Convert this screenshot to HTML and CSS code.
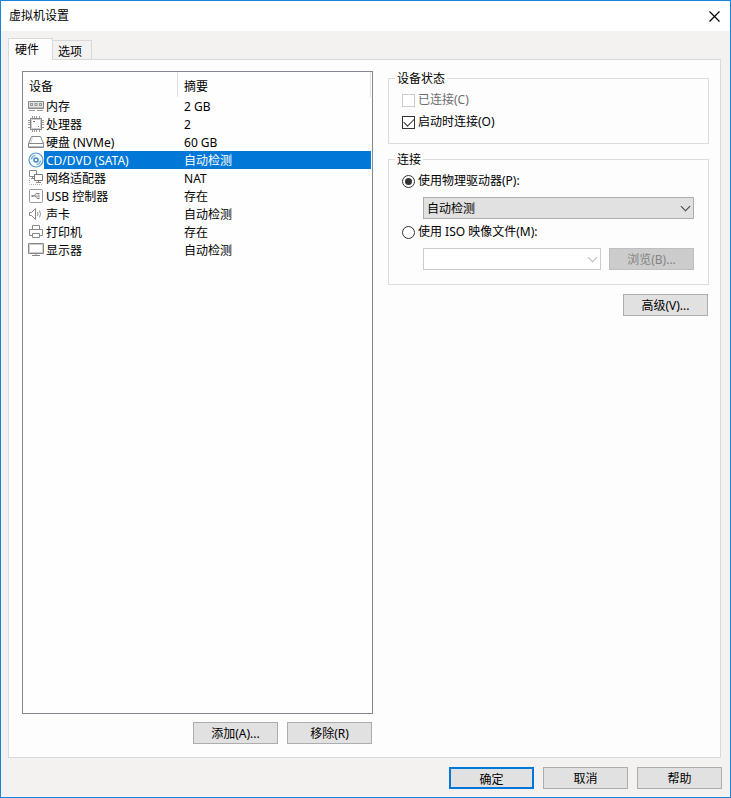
FILE: index.html
```html
<!DOCTYPE html>
<html lang="zh-CN">
<head>
    <meta charset="UTF-8">
    <meta name="viewport" content="width=device-width, initial-scale=1.0">
    <title>虚拟机设置</title>
    <link rel="stylesheet" href="styles.css">
</head>
<body>
    <div class="dialog">
        <header class="titlebar">
            <h1>虚拟机设置</h1>
            <button type="button" class="close" aria-label="关闭">
                <svg width="11" height="11" viewBox="0 0 11 11"><path d="M.5.5l10 10M10.5.5l-10 10" fill="none" stroke="#000" stroke-width="1.2"/></svg>
            </button>
        </header>

        <div class="tabs" role="tablist">
            <button type="button" class="tab active" role="tab" aria-selected="true">硬件</button>
            <button type="button" class="tab" role="tab" aria-selected="false">选项</button>
        </div>

        <main class="panel">
            <!-- Device list -->
            <section class="devices">
                <div class="list-box">
                    <table class="device-table">
                        <colgroup>
                            <col class="col-icon">
                            <col class="col-name">
                            <col>
                        </colgroup>
                        <thead>
                            <tr><th colspan="2">设备</th><th>摘要</th></tr>
                        </thead>
                        <tbody>
                            <tr>
                                <td class="icon"><svg width="16" height="16" viewBox="0 0 16 16"><path d="M.5 3.500h15v7h-15z" fill="#e4e4e4" stroke="#888"/><path d="M2 5h3v3H2zM6.500 5h3v3h-3zM11 5h3v3h-3z" fill="#999"/><path d="M3 6h1v1H3zM7.500 6h1v1h-1zM12 6h1v1h-1z" fill="#ddd"/><path d="M1 9.500h14" stroke="#bbb"/><path d="M1 12.500h6M9 12.500h6" stroke="#999"/></svg></td>
                                <td class="name">内存</td><td class="summary">2 GB</td>
                            </tr>
                            <tr>
                                <td class="icon"><svg width="16" height="16" viewBox="0 0 16 16"><path d="M4.500 0v2M6.500 0v2M8.500 0v2M11.500 0v2M4.500 14v2M6.500 14v2M8.500 14v2M11.500 14v2M0 4.500h2M0 6.500h2M0 8.500h2M0 11.500h2M14 4.500h2M14 6.500h2M14 8.500h2M14 11.500h2" stroke="#999"/><path d="M2.500 2.500h11v11h-11z" fill="#fff" stroke="#888"/><path d="M3.500 3.500h9v9h-9z" fill="none" stroke="#ccc"/><path d="M5 5h2v1H5zM10 10h1v1h-1z" fill="#777"/></svg></td>
                                <td class="name">处理器</td><td class="summary">2</td>
                            </tr>
                            <tr>
                                <td class="icon"><svg width="16" height="16" viewBox="0 0 16 16"><path d="M3.500 2.500h9l3 7v4H.5v-4zM.5 9.500h15" fill="#fff" stroke="#888"/><path d="M1 12.500h14" stroke="#bbb"/><path d="M2.500 9l2-5.500" fill="none" stroke="#ccc"/></svg></td>
                                <td class="name">硬盘 (NVMe)</td><td class="summary">60 GB</td>
                            </tr>
                            <tr class="selected">
                                <td class="icon"><svg width="16" height="16" viewBox="0 0 16 16"><circle cx="8" cy="8" r="7" fill="#f5fbff" stroke="#5699c8" stroke-width="1.200"/><circle cx="8" cy="8" r="2" fill="#fff" stroke="#3b87c0" stroke-width="1.500"/><path d="M3.500 7.500a4.500 4.500 0 0 1 4-4M12.500 8.500a4.500 4.500 0 0 1-4 4" fill="none" stroke="#7eb5d9" stroke-width="1.500"/></svg></td>
                                <td class="name">CD/DVD (SATA)</td><td class="summary">自动检测</td>
                            </tr>
                            <tr>
                                <td class="icon"><svg width="16" height="16" viewBox="0 0 16 16"><path d="M1.500.5h7v6h-7z" fill="#fff" stroke="#888"/><path d="M1.500 8v6.500h13" fill="none" stroke="#aaa" stroke-dasharray="1 1"/><path d="M6.500 4.500h8v6h-8z" fill="#fff" stroke="#777"/><path d="M10.500 11v2M8 12.500h5M4.500 7v2M3 8.500h3" stroke="#888"/></svg></td>
                                <td class="name">网络适配器</td><td class="summary">NAT</td>
                            </tr>
                            <tr>
                                <td class="icon"><svg width="16" height="16" viewBox="0 0 16 16"><rect x="1.500" y="1.500" width="13" height="13" rx="1" fill="#fff" stroke="#999"/><path d="M4 8h8M6 8l2-2.500h2M7 8l2 2.500h1" fill="none" stroke="#888"/><path d="M3.500 7h2v2h-2zM9.500 5h2v1.500h-2zM9.500 9.500h2V11h-2z" fill="#888"/></svg></td>
                                <td class="name">USB 控制器</td><td class="summary">存在</td>
                            </tr>
                            <tr>
                                <td class="icon"><svg width="16" height="16" viewBox="0 0 16 16"><path d="M1.500 6.500h2l4-4v11l-4-4h-2z" fill="#fff" stroke="#888"/><path d="M9.500 6q1 2 0 4M11.500 4.500q2 3.500 0 7" fill="none" stroke="#999"/></svg></td>
                                <td class="name">声卡</td><td class="summary">自动检测</td>
                            </tr>
                            <tr>
                                <td class="icon"><svg width="16" height="16" viewBox="0 0 16 16"><path d="M4.500 5.500v-4h7v4" fill="#fff" stroke="#888"/><path d="M4 11.500H1.500v-6h13v6H12" fill="#fff" stroke="#888"/><path d="M4.500 9.500h7v4h-7z" fill="#fff" stroke="#888"/></svg></td>
                                <td class="name">打印机</td><td class="summary">存在</td>
                            </tr>
                            <tr>
                                <td class="icon"><svg width="16" height="16" viewBox="0 0 16 16"><path d="M.5 1.500h15v10H.5z" fill="#fff" stroke="#888"/><path d="M1.500 2.500h13v8h-13z" fill="none" stroke="#ccc"/><path d="M8 12v1M4 13.500h8" stroke="#888"/></svg></td>
                                <td class="name">显示器</td><td class="summary">自动检测</td>
                            </tr>
                        </tbody>
                    </table>
                </div>
                <div class="buttons">
                    <button type="button" class="btn">添加(A)...</button>
                    <button type="button" class="btn">移除(R)</button>
                </div>
            </section>

            <!-- Settings of the selected device -->
            <section class="settings">
                <fieldset class="group status">
                    <legend>设备状态</legend>
                    <label class="option disabled"><input type="checkbox" disabled>已连接(C)</label>
                    <label class="option"><input type="checkbox" checked>启动时连接(O)</label>
                </fieldset>

                <fieldset class="group connection">
                    <legend>连接</legend>
                    <label class="option"><input type="radio" name="source" checked>使用物理驱动器(P):</label>
                    <div class="source-row">
                        <div class="combo">
                            <select aria-label="物理驱动器"><option>自动检测</option></select>
                        </div>
                    </div>
                    <label class="option"><input type="radio" name="source">使用 ISO 映像文件(M):</label>
                    <div class="source-row">
                        <div class="combo disabled">
                            <select aria-label="ISO 映像文件" disabled><option></option></select>
                        </div>
                        <button type="button" class="btn" disabled>浏览(B)...</button>
                    </div>
                </fieldset>

                <div class="buttons">
                    <button type="button" class="btn">高级(V)...</button>
                </div>
            </section>
        </main>

        <footer class="buttons footer">
            <button type="button" class="btn primary">确定</button>
            <button type="button" class="btn">取消</button>
            <button type="button" class="btn">帮助</button>
        </footer>
    </div>
</body>
</html>
```
FILE: styles.css
```css
* {
    box-sizing: border-box;
}
body {
    margin: 0;
    font-family: "Noto Sans", "Noto Sans CJK SC", sans-serif;
    font-size: 12px;
    line-height: 18px;
    color: #000;
}
button, select, input {
    margin: 0;
    font: inherit;
    color: inherit;
}
.dialog {
    display: flex;
    flex-direction: column;
    min-height: 100vh;
    border: 1px solid #1883d7;
    background: #f3f2f1;
}

.titlebar {
    display: flex;
    justify-content: space-between;
    align-items: center;
    height: 30px;
    padding: 0 10px 0 8px;
    background: #fff;
}
.titlebar h1 {
    margin: 0;
    font-size: 12px;
    font-weight: normal;
}
.close {
    display: flex;
    padding: 0;
    border: none;
    background: none;
}

.tabs {
    display: flex;
    align-items: flex-end;
    height: 28px;
    padding: 0 7px;
}
.tab {
    height: 19px;
    padding: 2px 9px 0 5px;
    border: 1px solid #d9d9d9;
    border-width: 1px 1px 0 0;
    background: #f3f2f1;
}
.tab.active {
    position: relative;
    z-index: 1;
    height: 22px;
    margin-bottom: -1px;
    padding: 1px 13px 0 6px;
    border-left-width: 1px;
    background: #fdfdfd;
}

.panel {
    display: grid;
    grid-template-columns: minmax(0, 1fr) 321px;
    gap: 15px;
    flex: 1;
    margin: 0 9px 0 7px;
    padding: 11px 11px 13px 13px;
    border: 1px solid #d9d9d9;
    background: #fdfdfd;
}
.devices {
    display: flex;
    flex-direction: column;
    gap: 8px;
}
.list-box {
    flex: 1;
    padding-right: 1px;
    border: 1px solid #828790;
    background: #fefefe;
}
.device-table {
    width: 100%;
    table-layout: fixed;
    border-spacing: 0;
}
.col-icon {
    width: 21px;
}
.col-name {
    width: 134px;
}
.device-table th {
    height: 25px;
    padding: 4px 6px 0;
    border-right: 1px solid #e0e0e0;
    font-weight: normal;
    text-align: left;
}
.device-table td {
    height: 18px;
    padding: 0;
    line-height: 16px;
}
.device-table .icon {
    padding-left: 5px;
}
.icon svg {
    display: block;
}
.device-table .name {
    padding: 2px 0 0 2px;
}
.device-table .summary {
    padding: 2px 0 0 6px;
}
.selected .name,
.selected .summary {
    background: #0078d7;
    color: #fff;
}

.buttons {
    display: flex;
    justify-content: flex-end;
    gap: 9px;
}
.panel .buttons {
    padding-right: 1px;
}
.btn {
    width: 85px;
    height: 22px;
    padding: 2px 0 0;
    border: 1px solid #adadad;
    background: #e1e1e1;
    line-height: 18px;
}
.btn.primary {
    border: 2px solid #0078d7;
}
.btn:disabled {
    border-color: #bfbfbf;
    background: #ccc;
    color: #838383;
}
.footer {
    padding: 9px 8px 8px;
}

.group {
    min-width: 0;
    margin: 0;
    padding: 4px 14px 0 13px;
    border: 1px solid #dcdcdc;
}
.group legend {
    height: 14px;
    padding: 1px 2px 0;
    margin-left: -7px;
    line-height: 14px;
}
.status {
    height: 73px;
    margin-bottom: 8px;
}
.connection {
    height: 133px;
    margin-bottom: 9px;
}
.option {
    display: flex;
    align-items: center;
    gap: 3px;
    height: 22px;
}
.option.disabled {
    color: #6d6d6d;
}
.option input {
    display: flex;
    justify-content: center;
    align-items: center;
    appearance: none;
    width: 13px;
    height: 13px;
    border: 1px solid #333;
    background: #fff;
}
.option input:disabled {
    border-color: #ccc;
}
.option input[type="radio"] {
    border-radius: 50%;
}
.option input[type="checkbox"]:checked::before {
    content: "";
    width: 9px;
    height: 5px;
    margin-bottom: 3px;
    border: solid #333;
    border-width: 0 0 1px 1px;
    transform: rotate(-45deg);
}
.option input[type="radio"]:checked::before {
    content: "";
    width: 7px;
    height: 7px;
    border-radius: 50%;
    background: #333;
}
.source-row {
    display: flex;
    gap: 8px;
    margin: 5px 0 2px;
    padding-left: 21px;
}
.combo {
    position: relative;
    flex: 1;
}
.combo select {
    display: block;
    appearance: none;
    width: 100%;
    height: 22px;
    padding: 2px 3px 0;
    border: 1px solid #adadad;
    border-radius: 0;
    background: #e1e1e1;
    opacity: 1;
}
.combo.disabled select {
    border-color: #ccc;
    background: #fff;
}
/* drop-down arrow */
.combo::after {
    content: "";
    position: absolute;
    top: 6px;
    right: 5px;
    width: 6px;
    height: 6px;
    border: solid #444;
    border-width: 0 1px 1px 0;
    transform: rotate(45deg);
    pointer-events: none;
}
.combo.disabled::after {
    border-color: #bbb;
}
```
